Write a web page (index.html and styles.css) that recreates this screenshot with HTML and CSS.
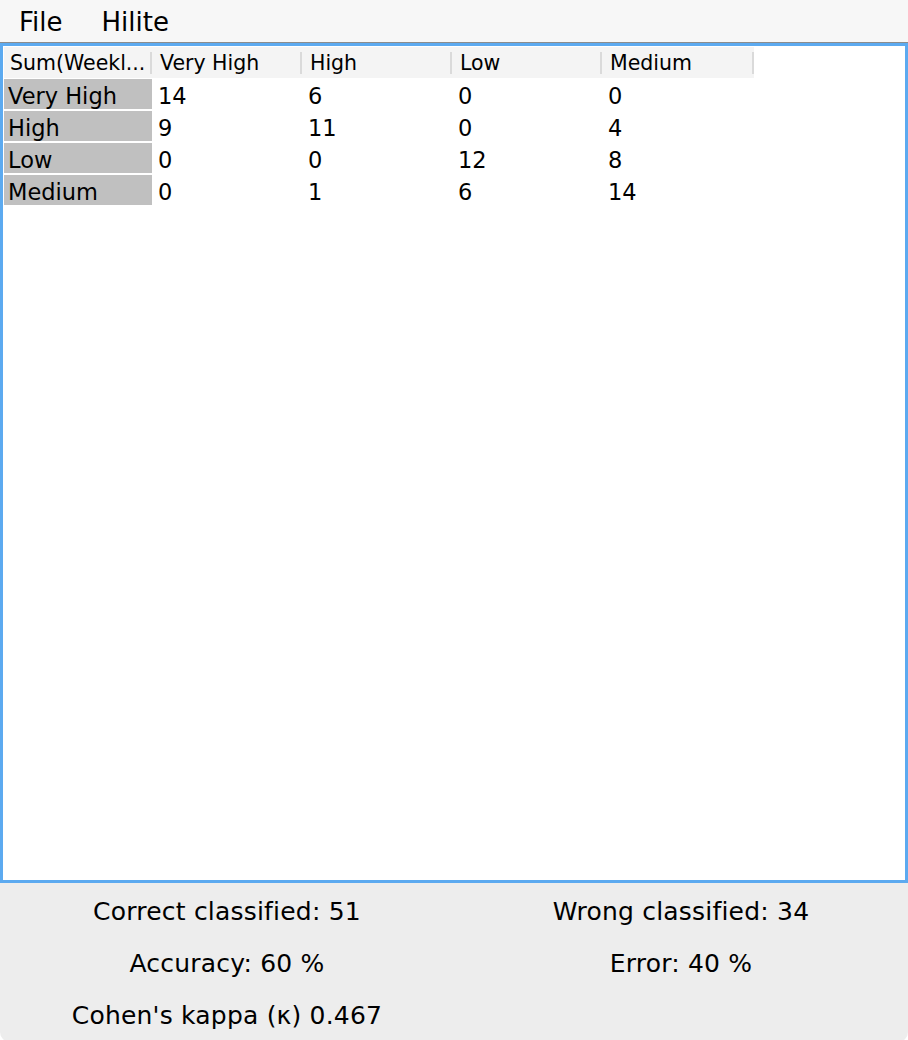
FILE: index.html
```html
<!DOCTYPE html>
<html>
<head>
<meta charset="utf-8">
<link rel="stylesheet" href="styles.css">
</head>
<body>
<div class="window">
  <div class="menubar">
    <span class="menu-item">File</span>
    <span class="menu-item">Hilite</span>
  </div>
  <div class="panel">
    <div class="grid">
      <div class="hcell first">Sum(Weekl...</div>
      <div class="hcell">Very High</div>
      <div class="hcell">High</div>
      <div class="hcell">Low</div>
      <div class="hcell">Medium</div>

      <div class="rhead">Very High</div>
      <div class="cell">14</div><div class="cell">6</div><div class="cell">0</div><div class="cell">0</div>

      <div class="rhead">High</div>
      <div class="cell">9</div><div class="cell">11</div><div class="cell">0</div><div class="cell">4</div>

      <div class="rhead">Low</div>
      <div class="cell">0</div><div class="cell">0</div><div class="cell">12</div><div class="cell">8</div>

      <div class="rhead">Medium</div>
      <div class="cell">0</div><div class="cell">1</div><div class="cell">6</div><div class="cell">14</div>
    </div>
  </div>
  <div class="footer">
    <div class="stat">Correct classified: 51</div>
    <div class="stat">Wrong classified: 34</div>
    <div class="stat">Accuracy: 60 %</div>
    <div class="stat">Error: 40 %</div>
    <div class="stat">Cohen's kappa (κ) 0.467</div>
    <div class="stat"></div>
  </div>
</div>
</body>
</html>
```

FILE: styles.css
```css
html, body {
  margin: 0;
  padding: 0;
  background: #ffffff;
}
body {
  width: 908px;
  height: 1040px;
  overflow: hidden;
  font-family: "DejaVu Sans", sans-serif;
  color: #000;
}
.window {
  display: flex;
  flex-direction: column;
  height: 1040px;
}
.menubar {
  height: 42px;
  flex: none;
  background: #f7f7f7;
  border-bottom: 1px solid #8c8c8c;
  display: flex;
  align-items: flex-start;
}
.menu-item {
  font-size: 26px;
  padding: 2px 20px 0 19px;
  line-height: 40px;
}
.panel {
  height: 840px;
  flex: none;
  box-sizing: border-box;
  border: 3px solid #5caaf0;
  background: #ffffff;
  padding: 1px 0 0 1px;
}
.grid {
  display: grid;
  grid-template-columns: 148px 150px 150px 150px 152px;
  grid-auto-rows: 30px;
  row-gap: 2px;
  width: 750px;
}
.hcell {
  position: relative;
  height: 31px;
  box-sizing: border-box;
  background: #f4f4f4;
  font-size: 20.5px;
  padding-top: 2px;
  line-height: 29px;
  padding-left: 8px;
  white-space: nowrap;
  overflow: hidden;
}
.hcell.first {
  padding-left: 6px;
}
.hcell::after {
  content: "";
  position: absolute;
  right: 0;
  top: 5px;
  bottom: 4px;
  width: 2px;
  background: #dadada;
}
.rhead {
  background: #c0c0c0;
  font-size: 22.5px;
  padding-top: 4px;
  line-height: 26px;
  padding-left: 4px;
  white-space: nowrap;
}
.cell {
  font-size: 22.5px;
  padding-top: 4px;
  line-height: 26px;
  padding-left: 6px;
}
.footer {
  flex: 1;
  background: #ededed;
  border-radius: 0 0 10px 10px;
  display: grid;
  grid-template-columns: 1fr 1fr;
  grid-auto-rows: 52px;
  padding-top: 3px;
}
.stat {
  font-size: 25px;
  letter-spacing: 0.2px;
  text-align: center;
  line-height: 52px;
  white-space: nowrap;
}
```
